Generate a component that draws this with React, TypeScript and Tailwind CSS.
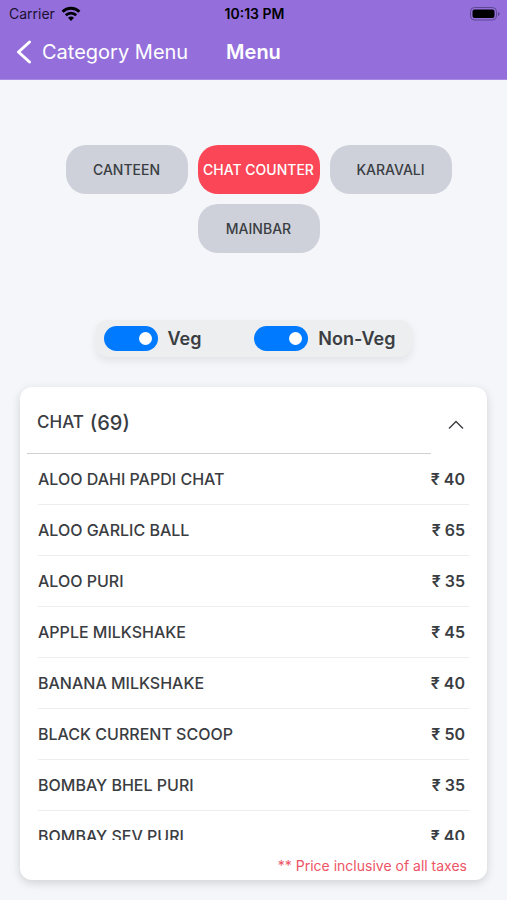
import { useState } from 'react';

const counters = ['CANTEEN', 'CHAT COUNTER', 'KARAVALI', 'MAINBAR'];

const items = [
  { name: 'ALOO DAHI PAPDI CHAT', price: 40 },
  { name: 'ALOO GARLIC BALL', price: 65 },
  { name: 'ALOO PURI', price: 35 },
  { name: 'APPLE MILKSHAKE', price: 45 },
  { name: 'BANANA MILKSHAKE', price: 40 },
  { name: 'BLACK CURRENT SCOOP', price: 50 },
  { name: 'BOMBAY BHEL PURI', price: 35 },
  { name: 'BOMBAY SEV PURI', price: 40 },
];

function StatusBar() {
  return (
    <div className="grid grid-cols-[1fr_auto_1fr] items-center h-7 pl-[9px] pr-[7px] text-sm text-[#1a1030]">
      <div className="flex items-center gap-1.5">
        <span>Carrier</span>
        <svg className="w-5 h-4" viewBox="0 0 20 16" fill="none" stroke="#000" strokeWidth={2.8}>
          <path d="M1.600 5.700a12 12 0 0 1 16.800 0" />
          <path d="M4.800 9.300a7.400 7.400 0 0 1 10.400 0" />
          <path d="M10 15l-3-3.200a4.400 4.400 0 0 1 6 0z" fill="#000" stroke="none" />
        </svg>
      </div>
      <span className="font-semibold text-black">10:13 PM</span>
      <svg className="w-8 h-4 justify-self-end" viewBox="0 0 32 16">
        <rect x="2.5" y="1.500" width="26" height="12.500" rx="4" fill="none" stroke="#5d4693" />
        <rect x="4.500" y="3.500" width="22" height="8.500" rx="2" />
        <path d="M30 6v4c1-.4 1.600-1.100 1.600-2S31 6.400 30 6z" fill="#5d4693" />
      </svg>
    </div>
  );
}

function Toggle({ label }: { label: string }) {
  const [on, setOn] = useState(true);

  return (
    <label className="flex items-center gap-2.5">
      <input
        type="checkbox"
        checked={on}
        onChange={() => setOn(!on)}
        className="flex items-center appearance-none w-[54px] h-[25px] px-1.5 rounded-full bg-gray-400 checked:bg-[#007aff] checked:justify-end before:content-[''] before:w-[13px] before:h-[13px] before:rounded-full before:bg-white"
      />
      <span className="text-lg leading-6 font-semibold">{label}</span>
    </label>
  );
}

export default function App() {
  const [counter, setCounter] = useState('CHAT COUNTER');
  const [isOpen, setIsOpen] = useState(true);

  return (
    <div className="flex flex-col h-screen bg-[#f4f6f9] text-[#3a3d42] font-[Inter,sans-serif]">
      <header className="bg-[#946fdc] border-b border-[#a88be2]">
        <StatusBar />
        <nav className="grid grid-cols-[1fr_auto_1fr] items-center h-[51px] pl-4 pr-4 pb-1 text-xl text-white">
          <a href="#categories" className="flex items-center gap-2.5">
            <svg className="w-4 h-6" viewBox="0 0 16 24" fill="none" stroke="currentColor" strokeWidth={3}>
              <path strokeLinecap="round" strokeLinejoin="round" d="M13.500 2L2.500 12l11 10" />
            </svg>
            <span>Category Menu</span>
          </a>
          <h1 className="font-semibold">Menu</h1>
        </nav>
      </header>

      <div className="flex flex-wrap justify-center gap-2.5 pt-[65px] pl-[60px] pr-[50px]">
        {counters.map(name => (
          <button
            key={name}
            type="button"
            onClick={() => setCounter(name)}
            className={`w-[122px] h-[49px] rounded-[20px] text-sm font-medium whitespace-nowrap ${
              counter === name ? 'bg-[#fb4657] text-white' : 'bg-[#ced1da]'
            }`}
          >
            {name}
          </button>
        ))}
      </div>

      <div className="flex self-center justify-between w-[316px] mt-[67px] py-1.5 pl-2 pr-4 rounded-xl bg-[#eceeef] shadow-[0_4px_8px_rgba(0,0,0,0.08)]">
        <Toggle label="Veg" />
        <Toggle label="Non-Veg" />
      </div>

      <main className="flex flex-col flex-1 min-h-0 mx-5 mt-[30px] mb-5 rounded-xl bg-white shadow-[0_3px_10px_rgba(0,0,0,0.15)]">
        <button
          type="button"
          aria-expanded={isOpen}
          onClick={() => setIsOpen(!isOpen)}
          className="flex items-stretch shrink-0 h-[67px] pl-[7px] text-left"
        >
          <span className="flex flex-1 items-center gap-1.5 pl-2.5 pt-1.5 border-b border-[#cfd0d2]">
            <span className="text-[17px] font-medium">CHAT</span>
            <span className="text-xl font-medium">(69)</span>
          </span>
          <span className="flex items-center w-14 pt-2 pl-[17px]">
            <svg
              className={`w-4 h-4 ${isOpen ? '' : 'rotate-180'}`}
              viewBox="0 0 16 16"
              fill="none"
              stroke="currentColor"
              strokeWidth={1.4}
            >
              <path d="M1 11.500l7-7 7 7" />
            </svg>
          </span>
        </button>

        <ul className="flex-1 min-h-0 ml-[18px] mr-[18px] overflow-y-auto [scrollbar-width:none]">
          {isOpen &&
            items.map(item => (
              <li
                key={item.name}
                className="flex items-center justify-between h-[51px] pr-1 border-b border-[#ededee] text-base font-medium"
              >
                <span>{item.name}</span>
                <span className="font-semibold">₹ {item.price}</span>
              </li>
            ))}
        </ul>

        <p className="h-10 pt-4 pr-5 text-right text-sm text-[#ee5365]">** Price inclusive of all taxes</p>
      </main>
    </div>
  );
}
